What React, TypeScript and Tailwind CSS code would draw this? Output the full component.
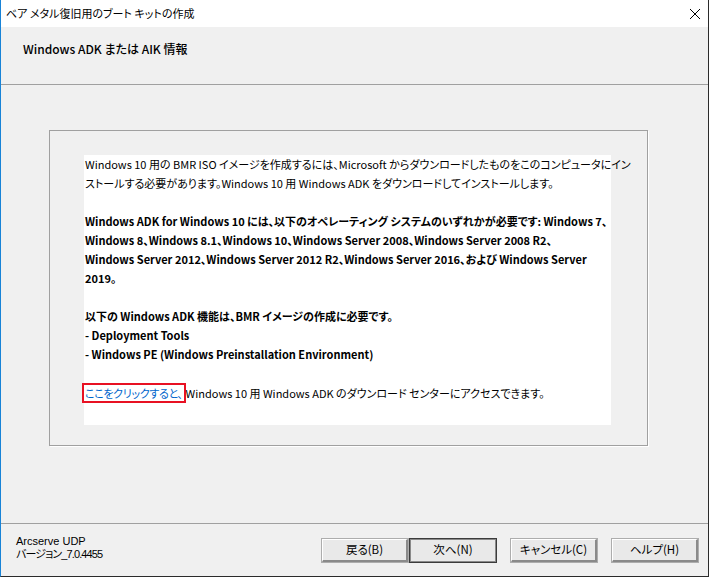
import React from "react";

const jp = { fontFamily: '"Noto Sans CJK JP", sans-serif' };

const Button: React.FC<{ label: string; primary?: boolean }> = ({ label, primary }) => (
  <button
    className={`w-[88px] h-[25px] bg-[#e9e9e9] text-[11.5px] text-black ${
      primary ? "border border-[#3c3c3c]" : "border border-[#adadad]"
    }`}
  >
    <div
      className={`w-full h-full flex items-center justify-center ${
        primary ? "border border-[#8a8a8a]" : "border-b-2 border-r-2 border-b-[#8a8a8a] border-r-[#8a8a8a] border-t border-l border-t-white border-l-white"
      }`}
    >
      {label}
    </div>
  </button>
);

export default function App() {
  return (
    <div
      className="w-[709px] h-[577px] flex flex-col bg-[#f0f0f0] border-l border-l-[#1883d7] border-r border-r-[#2b2b2b] border-b border-b-[#2b2b2b] text-black overflow-hidden [font-feature-settings:'palt']"
      style={jp}
    >
      {/* title bar */}
      <div className="h-[27px] bg-white flex items-center justify-between pl-[5px] pr-[6px] shrink-0">
        <span className="text-[11px]">ベア メタル復旧用のブート キットの作成</span>
        <svg width="12" height="12" viewBox="0 0 12 12" className="mr-[1px]">
          <path d="M1 1 L11 11 M11 1 L1 11" stroke="#000" strokeWidth="1" fill="none" />
        </svg>
      </div>

      {/* header */}
      <div className="h-[58px] border-b border-[#a0a0a0] pl-[22px] pt-[8px] shrink-0">
        <span className="text-[12px] font-medium">Windows ADK または AIK 情報</span>
      </div>

      {/* main */}
      <div className="flex-1 pl-[48px] pt-[45px]">
        <div className="w-[599px] h-[316px] border border-[#a0a0a0] shadow-[1px_1px_0_#fff] pl-[34px] pt-[24px]">
          <div className="w-[527px] h-[270px] bg-white pl-[1px] text-[11px] leading-[19px] whitespace-nowrap">
            <p>
              Windows 10 用の BMR ISO イメージを作成するには、Microsoft からダウンロードしたものをこのコンピュータにイン
              <br />
              ストールする必要があります。Windows 10 用 Windows ADK をダウンロードしてインストールします。
            </p>
            <p className="mt-[19px] font-bold">
              Windows ADK for Windows 10 には、以下のオペレーティング システムのいずれかが必要です: Windows 7、
              <br />
              Windows 8、Windows 8.1、Windows 10、Windows Server 2008、Windows Server 2008 R2、
              <br />
              Windows Server 2012、Windows Server 2012 R2、Windows Server 2016、および Windows Server
              <br />
              2019。
            </p>
            <p className="mt-[19px] font-bold">
              以下の Windows ADK 機能は、BMR イメージの作成に必要です。
              <br />
              - Deployment Tools
              <br />
              - Windows PE (Windows Preinstallation Environment)
            </p>
            <p className="mt-[19px] -ml-[3px]">
              <a className="inline-block leading-[16px] text-[#0066cc] border-2 border-[#e81123] px-[1px] tracking-[-0.03em]">ここをクリックすると、</a>
              Windows 10 用 Windows ADK のダウンロード センターにアクセスできます。
            </p>
          </div>
        </div>
      </div>

      {/* footer */}
      <div className="h-[53px] border-t border-[#a0a0a0] flex items-center shrink-0">
        <div className="pl-[15px] text-[11px] leading-[13px] -mt-[5px]" style={{ fontFamily: '"Liberation Sans", "Noto Sans CJK JP", sans-serif' }}>
          <div>Arcserve UDP</div>
          <div className="tracking-[-0.08em]">バージョン_7.0.4455</div>
        </div>
        <div className="ml-auto flex items-center mr-[9px]">
          <Button label="戻る(B)" />
          <Button label="次へ(N)" primary />
          <div className="w-[13px]" />
          <Button label="キャンセル(C)" />
          <div className="w-[13px]" />
          <Button label="ヘルプ(H)" />
        </div>
      </div>
    </div>
  );
}
